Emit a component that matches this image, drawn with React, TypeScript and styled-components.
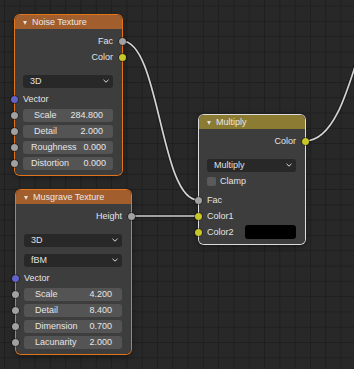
import React from "react";
import styled, { createGlobalStyle } from "styled-components";

const GlobalStyle = createGlobalStyle`
  html, body {
    margin: 0;
    padding: 0;
    background: #282828;
  }
  * {
    box-sizing: border-box;
  }
`;

const SOCKET = {
  float: "#a1a1a1",
  color: "#c7c729",
  vector: "#6363c7",
};

// node editor background with grid
const Canvas = styled.div`
  position: relative;
  width: 354px;
  height: 369px;
  overflow: hidden;
  background-color: #282828;
  background-image: linear-gradient(#1f1f1f 1px, transparent 1px),
    linear-gradient(90deg, #1f1f1f 1px, transparent 1px);
  background-size: 15.3px 15.3px;
  background-position: 4px 5.5px;
  font-family: "Liberation Sans", "DejaVu Sans", sans-serif;
  font-size: 9px;
  color: #e4e4e4;
`;

const Links = styled.svg`
  position: absolute;
  left: 0;
  top: 0;
`;

const Node = styled.div<{ $x: number; $y: number; $w: number; $outline: string }>`
  position: absolute;
  left: ${({ $x }) => $x}px;
  top: ${({ $y }) => $y}px;
  width: ${({ $w }) => $w}px;
  border-radius: 5px;
  background: rgba(63, 63, 63, 0.94);
  box-shadow: 0 0 0 1px ${({ $outline }) => $outline}, 0 2px 6px rgba(0, 0, 0, 0.45);
`;

const Header = styled.div<{ $color: string }>`
  height: 14px;
  display: flex;
  align-items: center;
  gap: 5px;
  padding-left: 8px;
  background: ${({ $color }) => $color};
  border-radius: 5px 5px 0 0;
  color: #e8e8e8;
  white-space: nowrap;
`;

const Arrow = styled.span`
  width: 0;
  height: 0;
  border-left: 2.5px solid transparent;
  border-right: 2.5px solid transparent;
  border-top: 4px solid #e0e0e0;
  margin-top: 1px;
`;

const Body = styled.div`
  padding: 4px 0 4px;
`;

const Row = styled.div<{ $out?: boolean; $gap?: number }>`
  position: relative;
  height: 16px;
  display: flex;
  align-items: center;
  justify-content: ${({ $out }) => ($out ? "flex-end" : "flex-start")};
  padding: 0 9px 0 8px;
  margin-top: ${({ $gap }) => $gap ?? 0}px;
  white-space: nowrap;
`;

const Socket = styled.span<{ $color: string; $out?: boolean }>`
  position: absolute;
  top: 50%;
  ${({ $out }) => ($out ? "right: -4px;" : "left: -4px;")}
  width: 7px;
  height: 7px;
  margin-top: -3.5px;
  border-radius: 50%;
  background: ${({ $color }) => $color};
  box-shadow: 0 0 0 0.5px rgba(0, 0, 0, 0.7);
`;

const Dropdown = styled.div`
  flex: 1;
  height: 13px;
  display: flex;
  align-items: center;
  justify-content: space-between;
  padding: 0 4px 0 7px;
  background: #282828;
  border-radius: 3px;
  color: #e0e0e0;
`;

const Field = styled.div<{ $pad?: number }>`
  flex: 1;
  height: 13px;
  display: flex;
  align-items: center;
  justify-content: space-between;
  padding: 0 ${({ $pad }) => $pad ?? 10}px 0 ${({ $pad }) => ($pad ?? 10) + 1}px;
  background: #545454;
  border-radius: 3px;
  color: #e6e6e6;
`;

const Check = styled.span`
  width: 9px;
  height: 9px;
  margin-right: 4px;
  border-radius: 2px;
  background: #5a5a5a;
`;

const Swatch = styled.span`
  width: 51px;
  height: 14px;
  margin-left: auto;
  border-radius: 3px;
  background: #000;
`;

const Chevron = () => (
  <svg width="6" height="4" viewBox="0 0 6 4">
    <polyline points="0.5,0.8 3,3.2 5.5,0.8" fill="none" stroke="#d8d8d8" strokeWidth="1" />
  </svg>
);

const Link = ({ d }: { d: string }) => (
  <g fill="none">
    <path d={d} stroke="#1b1b1b" strokeWidth={3.6} />
    <path d={d} stroke="#d2d2d2" strokeWidth={1.7} />
  </g>
);

type Slider = { label: string; value: string; pad?: number };

const Sliders = ({ items }: { items: Slider[] }) => (
  <>
    {items.map((s) => (
      <Row key={s.label}>
        <Socket $color={SOCKET.float} />
        <Field $pad={s.pad}>
          <span>{s.label}</span>
          <span>{s.value}</span>
        </Field>
      </Row>
    ))}
  </>
);

export default function App() {
  return (
    <>
      <GlobalStyle />
      <Canvas>
        <Links width={354} height={369}>
          <Link d="M122,41 C160,41 160,200 198,200" />
          <Link d="M131,216 L198,216" />
          <Link d="M305,141 C360,141 360,-40 415,-40" />
        </Links>

        <Node $x={15} $y={15} $w={107} $outline="#e2741c">
          <Header $color="#a35e2e">
            <Arrow />
            Noise Texture
          </Header>
          <Body>
            <Row $out>
              Fac
              <Socket $out $color={SOCKET.float} />
            </Row>
            <Row $out>
              Color
              <Socket $out $color={SOCKET.color} />
            </Row>
            <Row $gap={8}>
              <Dropdown>
                <span>3D</span>
                <Chevron />
              </Dropdown>
            </Row>
            <Row $gap={2}>
              <Socket $color={SOCKET.vector} />
              Vector
            </Row>
            <Sliders
              items={[
                { label: "Scale", value: "284.800" },
                { label: "Detail", value: "2.000" },
                { label: "Roughness", value: "0.000", pad: 7 },
                { label: "Distortion", value: "0.000", pad: 7 },
              ]}
            />
          </Body>
        </Node>

        <Node $x={16} $y={190} $w={115} $outline="#e2741c">
          <Header $color="#a35e2e">
            <Arrow />
            Musgrave Texture
          </Header>
          <Body>
            <Row $out>
              Height
              <Socket $out $color={SOCKET.float} />
            </Row>
            <Row $gap={8}>
              <Dropdown>
                <span>3D</span>
                <Chevron />
              </Dropdown>
            </Row>
            <Row $gap={4}>
              <Dropdown>
                <span>fBM</span>
                <Chevron />
              </Dropdown>
            </Row>
            <Row $gap={2}>
              <Socket $color={SOCKET.vector} />
              Vector
            </Row>
            <Sliders
              items={[
                { label: "Scale", value: "4.200" },
                { label: "Detail", value: "8.400" },
                { label: "Dimension", value: "0.700" },
                { label: "Lacunarity", value: "2.000" },
              ]}
            />
          </Body>
        </Node>

        <Node $x={199} $y={115} $w={106} $outline="#dcdcdc">
          <Header $color="#8c7b33">
            <Arrow />
            Multiply
          </Header>
          <Body>
            <Row $out>
              Color
              <Socket $out $color={SOCKET.color} />
            </Row>
            <Row $gap={8}>
              <Dropdown>
                <span>Multiply</span>
                <Chevron />
              </Dropdown>
            </Row>
            <Row>
              <Check />
              Clamp
            </Row>
            <Row $gap={3}>
              <Socket $color={SOCKET.float} />
              Fac
            </Row>
            <Row>
              <Socket $color={SOCKET.color} />
              Color1
            </Row>
            <Row>
              <Socket $color={SOCKET.color} />
              Color2
              <Swatch />
            </Row>
          </Body>
        </Node>
      </Canvas>
    </>
  );
}
